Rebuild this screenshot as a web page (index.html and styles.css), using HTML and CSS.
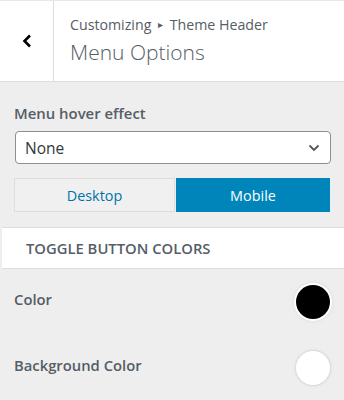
FILE: index.html
```html
<!DOCTYPE html>
<html lang="en">
<head>
  <meta charset="UTF-8" />
  <title>Menu Options</title>
  <link rel="stylesheet" href="styles.css">
</head>
<body>
  <div class="panel">
    <div class="head">
      <button class="back" aria-label="Back">
        <svg width="12" height="14" viewBox="0 0 12 14"><path d="M9 1.5 3.5 7 9 12.5" fill="none" stroke="#000" stroke-width="2.6"/></svg>
      </button>
      <div class="title">
        <div class="crumbs">Customizing <span class="arrow">&#9656;</span> Theme Header</div>
        <div class="name">Menu Options</div>
      </div>
    </div>

    <div class="body">
      <label class="field-label">Menu hover effect</label>
      <div class="select">
        <span>None</span>
        <svg width="12" height="8" viewBox="0 0 12 8"><path d="M1.5 1.5 6 6 10.5 1.5" fill="none" stroke="#555" stroke-width="1.8"/></svg>
      </div>

      <div class="devices">
        <button class="dev">Desktop</button>
        <button class="dev active">Mobile</button>
      </div>
    </div>

    <div class="section">TOGGLE BUTTON COLORS</div>

    <div class="color-row">
      <span>Color</span>
      <span class="swatch black"></span>
    </div>
    <div class="color-row">
      <span>Background Color</span>
      <span class="swatch white"></span>
    </div>
  </div>
</body>
</html>
```

FILE: styles.css
```css
body {
  margin: 0;
  font-family: 'Segoe UI', 'Open Sans', sans-serif;
  background: #eeeeee;
  color: #555d66;
}
.panel {
  width: 344px;
  height: 400px;
  overflow: hidden;
}
.head {
  display: flex;
  background: #fff;
  border-top: 1px solid #e8e8e8;
  border-bottom: 1px solid #dddddd;
  box-sizing: border-box;
  height: 82px;
}
.back {
  width: 54px;
  border: none;
  border-right: 1px solid #dddddd;
  background: #fff;
  padding: 0 0 0 1px;
  display: flex;
  align-items: center;
  justify-content: center;
}
.title {
  padding: 12px 0 0 16px;
}
.crumbs {
  font-size: 14.2px;
  line-height: 22px;
}
.arrow {
  font-size: 10px;
  vertical-align: 2px;
  margin: 0 3px;
}
.name {
  font-size: 21px;
  font-weight: 300;
  line-height: 30px;
  margin-top: 1px;
}
.body {
  padding: 21px 13px 0 14px;
}
.field-label {
  display: block;
  font-size: 14.9px;
  font-weight: 600;
  line-height: 21px;
}
.select {
  margin-top: 7px;
  margin-left: 1px;
  height: 33px;
  background: #fff;
  border: 1px solid #8c8f94;
  border-radius: 4px;
  box-sizing: border-box;
  display: flex;
  align-items: center;
  justify-content: space-between;
  padding: 0 10px 0 9px;
  font-size: 15.5px;
  color: #32373c;
}
.devices {
  display: flex;
  margin-top: 14px;
  margin-right: 1px;
}
.dev {
  flex: 1;
  height: 34px;
  border: 1px solid #dddddd;
  background: #f0f0f0;
  color: #0073aa;
  font-family: inherit;
  font-size: 14.4px;
}
.dev.active {
  flex: 0 0 154px;
  background: #0085ba;
  border-color: #0085ba;
  color: #fff;
  margin-left: 1px;
}
.section {
  margin: 15px 0 0 2px;
  height: 42px;
  box-sizing: border-box;
  background: #fff;
  border-top: 1px solid #dddddd;
  border-bottom: 1px solid #dddddd;
  padding: 10px 0 0 24px;
  font-size: 14.8px;
  font-weight: 600;
  line-height: 20px;
}
.color-row {
  display: flex;
  align-items: center;
  justify-content: space-between;
  height: 66px;
  padding: 0 14px;
  font-size: 14.8px;
  font-weight: 600;
}
.color-row span:first-child {
  margin-top: -6px;
}
.swatch {
  width: 34px;
  height: 34px;
  border-radius: 50%;
  box-shadow: 0 0 0 2px #fff, 0 0 4px 2px rgba(0, 0, 0, 0.08);
}
.swatch.black {
  background: #000;
}
.swatch.white {
  background: #fff;
  box-shadow: 0 0 0 1px #ddd, 0 0 3px 1px rgba(0, 0, 0, 0.08);
}
```
